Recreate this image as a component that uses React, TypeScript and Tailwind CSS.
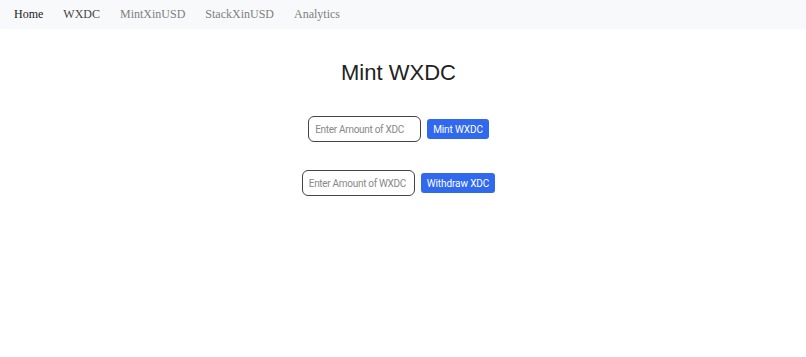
const nav = ["Home", "WXDC", "MintXinUSD", "StackXinUSD", "Analytics"];
const navColor = ["text-[#222]", "text-[#444]", "text-[#808080]", "text-[#808080]", "text-[#808080]"];

function Row({ placeholder, label }: { placeholder: string; label: string }) {
  return (
    <div className="flex items-center gap-[6px]">
      <input
        placeholder={placeholder}
        className="box-border w-[113px] h-[26px] border-[1.5px] border-[#444] rounded-[6px] px-[6px] text-[10px] tracking-[-0.3px] font-['Roboto','Liberation_Sans',sans-serif] placeholder:text-[#888] outline-none"
      />
      <button className="h-[20px] px-[6px] bg-[#3068ee] text-white text-[10px] tracking-[-0.1px] rounded-[3px] font-['Roboto','Liberation_Sans',sans-serif]">
        {label}
      </button>
    </div>
  );
}

export default function App() {
  return (
    <div className="min-h-[357px] bg-white">
      <nav className="h-[29px] bg-[#f8f9fa] flex items-center pl-[14px] gap-[20px] pb-[2px] font-['Liberation_Serif','Times_New_Roman',serif]">
        {nav.map((n, i) => (
          <span key={n} className={`text-[12px] ${navColor[i]}`}>{n}</span>
        ))}
      </nav>
      <div className="flex flex-col items-center pr-[9px] font-['Liberation_Sans',Arial,sans-serif]">
        <h1 className="mt-[31px] text-[22px] leading-[26px] text-[#222]">Mint WXDC</h1>
        <div className="mt-[30px]">
          <Row placeholder="Enter Amount of XDC" label="Mint WXDC" />
        </div>
        <div className="mt-[28px]">
          <Row placeholder="Enter Amount of WXDC" label="Withdraw XDC" />
        </div>
      </div>
    </div>
  );
}
